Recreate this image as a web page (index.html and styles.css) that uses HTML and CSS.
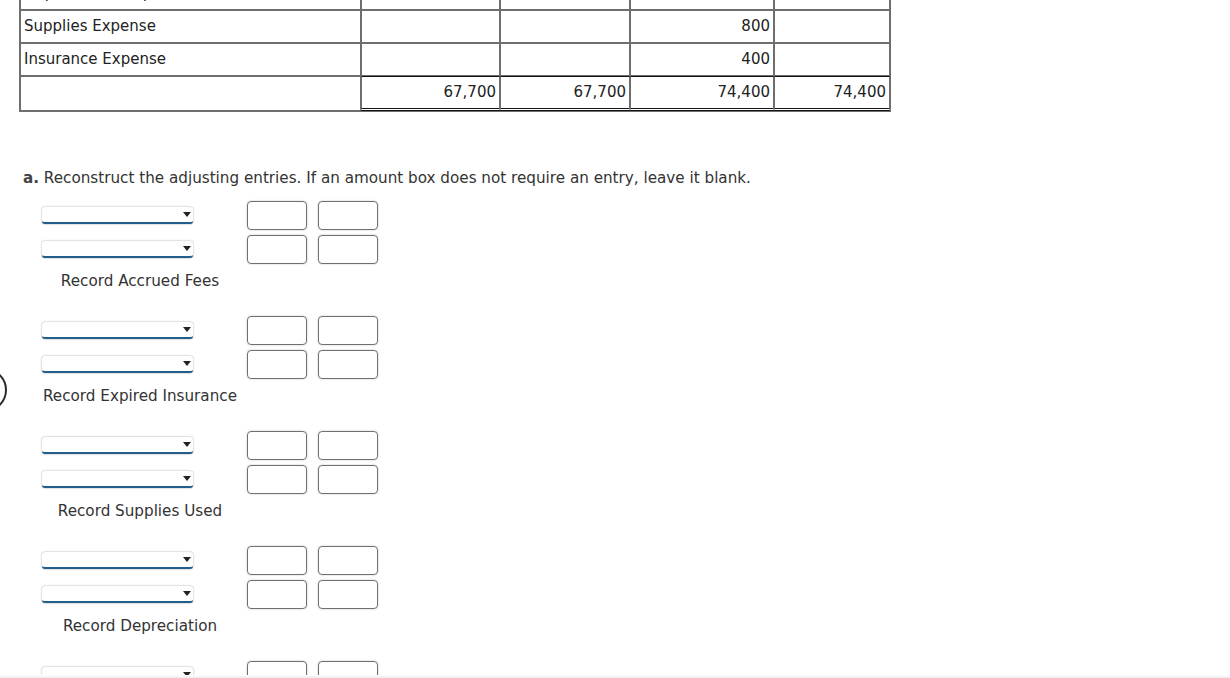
FILE: index.html
```html
<!DOCTYPE html>
<html>
<head>
<meta charset="utf-8">
<link rel="stylesheet" href="styles.css">
</head>
<body>
<div class="page">
  <table class="ledger">
    <colgroup>
      <col class="c1"><col class="c2"><col class="c3"><col class="c4"><col class="c5">
    </colgroup>
    <tr>
      <td class="name">Depreciation Expense</td><td></td><td></td><td class="num">1,500</td><td></td>
    </tr>
    <tr>
      <td class="name">Supplies Expense</td><td></td><td></td><td class="num">800</td><td></td>
    </tr>
    <tr>
      <td class="name">Insurance Expense</td><td></td><td></td><td class="num">400</td><td></td>
    </tr>
    <tr class="totals">
      <td></td><td class="num tot">67,700</td><td class="num tot">67,700</td><td class="num tot">74,400</td><td class="num tot">74,400</td>
    </tr>
  </table>

  <p class="instr"><b>a.</b> Reconstruct the adjusting entries. If an amount box does not require an entry, leave it blank.</p>

  <div class="entries">
    <div class="entry">
      <div class="line"><div class="sel"><span class="caret"></span></div><div class="box"></div><div class="box"></div></div>
      <div class="line"><div class="sel"><span class="caret"></span></div><div class="box"></div><div class="box"></div></div>
      <div class="label">Record Accrued Fees</div>
    </div>
    <div class="entry">
      <div class="line"><div class="sel"><span class="caret"></span></div><div class="box"></div><div class="box"></div></div>
      <div class="line"><div class="sel"><span class="caret"></span></div><div class="box"></div><div class="box"></div></div>
      <div class="label">Record Expired Insurance</div>
    </div>
    <div class="entry">
      <div class="line"><div class="sel"><span class="caret"></span></div><div class="box"></div><div class="box"></div></div>
      <div class="line"><div class="sel"><span class="caret"></span></div><div class="box"></div><div class="box"></div></div>
      <div class="label">Record Supplies Used</div>
    </div>
    <div class="entry">
      <div class="line"><div class="sel"><span class="caret"></span></div><div class="box"></div><div class="box"></div></div>
      <div class="line"><div class="sel"><span class="caret"></span></div><div class="box"></div><div class="box"></div></div>
      <div class="label">Record Depreciation</div>
    </div>
    <div class="entry">
      <div class="line"><div class="sel"><span class="caret"></span></div><div class="box"></div><div class="box"></div></div>
      <div class="line"><div class="sel"><span class="caret"></span></div><div class="box"></div><div class="box"></div></div>
      <div class="label">Record Accrued Wages</div>
    </div>
  </div>
</div>
<div class="ring"></div>
<div class="bottom-shade"></div>
</body>
</html>
```

FILE: styles.css
```css
html, body {
  margin: 0;
  padding: 0;
  background: #fff;
  overflow: hidden;
}
body {
  font-family: "DejaVu Sans", Verdana, sans-serif;
  color: #333;
  width: 1230px;
  height: 678px;
  position: relative;
}
.page {
  padding-left: 19px;
  margin-top: -24px;
}
.ledger {
  border-collapse: separate;
  border-spacing: 0;
  border: 1px solid #6e6e6e;
  table-layout: fixed;
  width: 870px;
  font-size: 15px;
  line-height: 17px;
  color: #222;
}
.c1 { width: 341px; }
.c2 { width: 139px; }
.c3 { width: 130px; }
.c4 { width: 144px; }
.c5 { width: 116px; }
.ledger td {
  border: 1px solid #6e6e6e;
  height: 31px;
  padding: 0 3px;
  vertical-align: middle;
  white-space: nowrap;
  overflow: hidden;
}
.ledger td.name { padding-left: 3px; }
.ledger td.num { text-align: right; }
.ledger tr.totals td { height: 31px; }
.ledger td.tot {
  border-top: 1px solid #111;
  border-bottom: 3px double #111;
}
.instr {
  margin: 57px 0 0 4px;
  font-size: 15.2px;
  color: #333;
}
.instr b { color: #444; }
.entries {
  margin-top: 14px;
  padding-left: 23px;
}
.entry {
  display: flex;
  flex-direction: column;
  gap: 5px;
  margin-bottom: 26px;
}
.line {
  display: flex;
  align-items: center;
  height: 29px;
}
.sel {
  position: relative;
  width: 151px;
  height: 15px;
  border-radius: 3px;
  box-shadow: 0 0 2px rgba(0,0,0,0.4);
  border-bottom: 2px solid #215e8c;
  background: #fff;
  margin-right: 54px;
}
.caret {
  position: absolute;
  right: 2px;
  top: 5px;
  width: 0;
  height: 0;
  border-left: 4px solid transparent;
  border-right: 4px solid transparent;
  border-top: 5px solid #222;
}
.box {
  width: 58px;
  height: 27px;
  border: 1px solid #707070;
  border-radius: 4px;
  box-shadow: 0 0 2px rgba(0,0,0,0.25);
  margin-right: 11px;
}
.label {
  width: 196px;
  text-align: center;
  font-size: 15.2px;
  color: #333;
  margin-top: 3px;
  line-height: 18px;
}
.ring {
  position: absolute;
  left: -37px;
  top: 368px;
  width: 40px;
  height: 40px;
  border: 2px solid #2a2a2a;
  border-radius: 50%;
}
.bottom-shade {
  position: absolute;
  left: 0;
  right: 0;
  bottom: 0;
  height: 3px;
  background: linear-gradient(#fff, #ececec);
}
```
